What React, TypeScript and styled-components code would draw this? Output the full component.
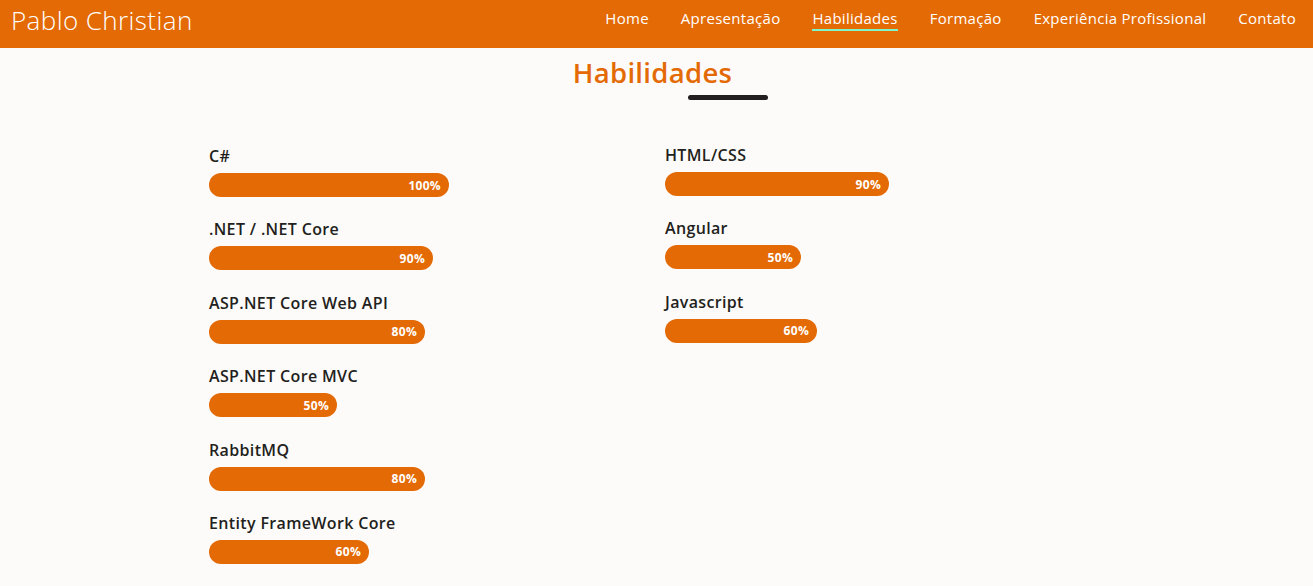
import React from "react";
import styled, { createGlobalStyle } from "styled-components";

const ORANGE = "#e36a05";
const DARK = "#231f20";

const GlobalStyle = createGlobalStyle`
  html, body { margin: 0; padding: 0; background: #fdfbf9; }
  body { font-family: "Open Sans", "Noto Sans", sans-serif; color: ${DARK}; }
  * { box-sizing: border-box; }
`;

const Header = styled.header`
  height: 48px;
  background: ${ORANGE};
  display: flex;
  align-items: center;
  justify-content: space-between;
  padding: 0 17px 0 11px;
`;

const Brand = styled.div`
  color: #fff;
  font-size: 26px;
  font-weight: 300;
  letter-spacing: 0.4px;
  margin-top: -8px;
`;

const Nav = styled.nav`
  display: flex;
  gap: 32px;
  margin-top: -9px;
`;

const NavLink = styled.a<{ $active?: boolean }>`
  color: #fff;
  font-size: 15px;
  font-weight: 400;
  letter-spacing: 0.28px;
  text-decoration: none;
  padding-bottom: 1px;
  border-bottom: 2px solid ${(p) => (p.$active ? "#7ef5c8" : "transparent")};
  line-height: 20px;
`;

const Section = styled.section`
  padding-top: 8px;
`;

const Title = styled.h2`
  margin: 0;
  text-align: center;
  color: ${ORANGE};
  font-size: 27.5px;
  font-weight: 600;
  line-height: 34px;
  letter-spacing: 0.3px;
  padding-right: 8px;
`;

const TitleBar = styled.div`
  width: 80px;
  height: 5px;
  border-radius: 3px;
  background: ${DARK};
  margin: 5px 0 0 calc(50% + 31.5px);
`;

const Grid = styled.div`
  display: grid;
  grid-template-columns: 456px 439px;
  justify-content: center;
  margin-top: 44px;
`;

const Column = styled.div<{ $shift?: number }>`
  display: flex;
  flex-direction: column;
  margin-top: ${(p) => p.$shift ?? 0}px;
`;

const Skill = styled.div`
  height: 73.4px;
`;

const Label = styled.div`
  font-size: 16px;
  font-weight: 600;
  letter-spacing: 0.35px;
  line-height: 24px;
  margin-bottom: 5px;
  color: ${DARK};
`;

const Bar = styled.div`
  height: 24px;
  border-radius: 12px;
  background: ${ORANGE};
  color: #fff;
  font-size: 12px;
  font-weight: 700;
  letter-spacing: 0.3px;
  display: flex;
  align-items: center;
  justify-content: flex-end;
  padding-right: 8px;
`;

type SkillT = { name: string; pct: string; w: number };

const left: SkillT[] = [
  { name: "C#", pct: "100%", w: 240 },
  { name: ".NET / .NET Core", pct: "90%", w: 224 },
  { name: "ASP.NET Core Web API", pct: "80%", w: 216 },
  { name: "ASP.NET Core MVC", pct: "50%", w: 128 },
  { name: "RabbitMQ", pct: "80%", w: 216 },
  { name: "Entity FrameWork Core", pct: "60%", w: 160 },
];

const right: SkillT[] = [
  { name: "HTML/CSS", pct: "90%", w: 224 },
  { name: "Angular", pct: "50%", w: 136 },
  { name: "Javascript", pct: "60%", w: 152 },
];

const SkillRow = ({ s }: { s: SkillT }) => (
  <Skill>
    <Label>{s.name}</Label>
    <Bar style={{ width: s.w }}>{s.pct}</Bar>
  </Skill>
);

export default function App() {
  return (
    <>
      <GlobalStyle />
      <Header>
        <Brand>Pablo Christian</Brand>
        <Nav>
          <NavLink>Home</NavLink>
          <NavLink>Apresentação</NavLink>
          <NavLink $active>Habilidades</NavLink>
          <NavLink>Formação</NavLink>
          <NavLink>Experiência Profissional</NavLink>
          <NavLink>Contato</NavLink>
        </Nav>
      </Header>
      <Section>
        <Title>Habilidades</Title>
        <TitleBar />
        <Grid>
          <Column>
            {left.map((s) => (
              <SkillRow key={s.name} s={s} />
            ))}
          </Column>
          <Column $shift={-1}>
            {right.map((s) => (
              <SkillRow key={s.name} s={s} />
            ))}
          </Column>
        </Grid>
      </Section>
    </>
  );
}
